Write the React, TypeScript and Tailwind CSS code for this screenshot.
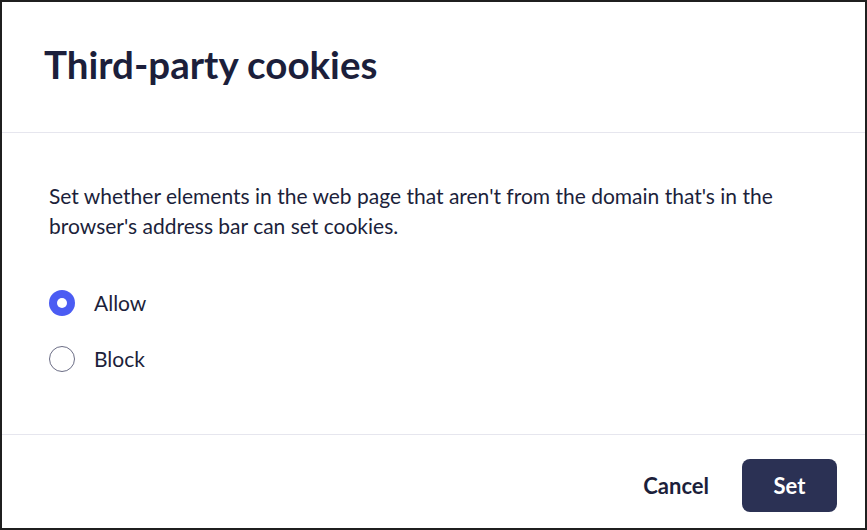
import React from "react";

export default function App() {
  return (
    <div
      className="flex h-[530px] w-[867px] flex-col border-2 border-[#1f1f1f] bg-white text-[#1c1f3b]"
      style={{ fontFamily: "Lato, 'Open Sans', sans-serif" }}
    >
      {/* header */}
      <div className="flex h-[131px] items-center border-b border-[#e6e6ee] px-[42px] pb-[5px]">
        <h1 className="text-[38.5px] font-bold leading-none">Third-party cookies</h1>
      </div>

      {/* body */}
      <div className="flex flex-1 flex-col px-[47px] pt-[48px]">
        <p className="text-[21px] leading-[30px]">
          Set whether elements in the web page that aren't from the domain that's in the
          browser's address bar can set cookies.
        </p>
        <div className="mt-[42px] flex flex-col gap-[16px]">
          <label className="flex h-[40px] items-center gap-[19px] text-[21px]">
            <span className="flex h-[26px] w-[26px] items-center justify-center rounded-full bg-[#4b5cf3]">
              <span className="h-[10px] w-[10px] rounded-full bg-white" />
            </span>
            Allow
          </label>
          <label className="flex h-[40px] items-center gap-[19px] text-[21px]">
            <span className="h-[26px] w-[26px] rounded-full border-[1.5px] border-[#6b6d85]" />
            Block
          </label>
        </div>
      </div>

      {/* footer */}
      <div className="flex h-[94px] items-center justify-end gap-[12px] border-t border-[#e6e6ee] pt-[8px] pr-[28px]">
        <button className="h-[53px] px-[21px] text-[22px] font-bold">Cancel</button>
        <button className="h-[53px] w-[95px] rounded-[8px] bg-[#2b3154] text-[22px] font-bold text-white">
          Set
        </button>
      </div>
    </div>
  );
}
